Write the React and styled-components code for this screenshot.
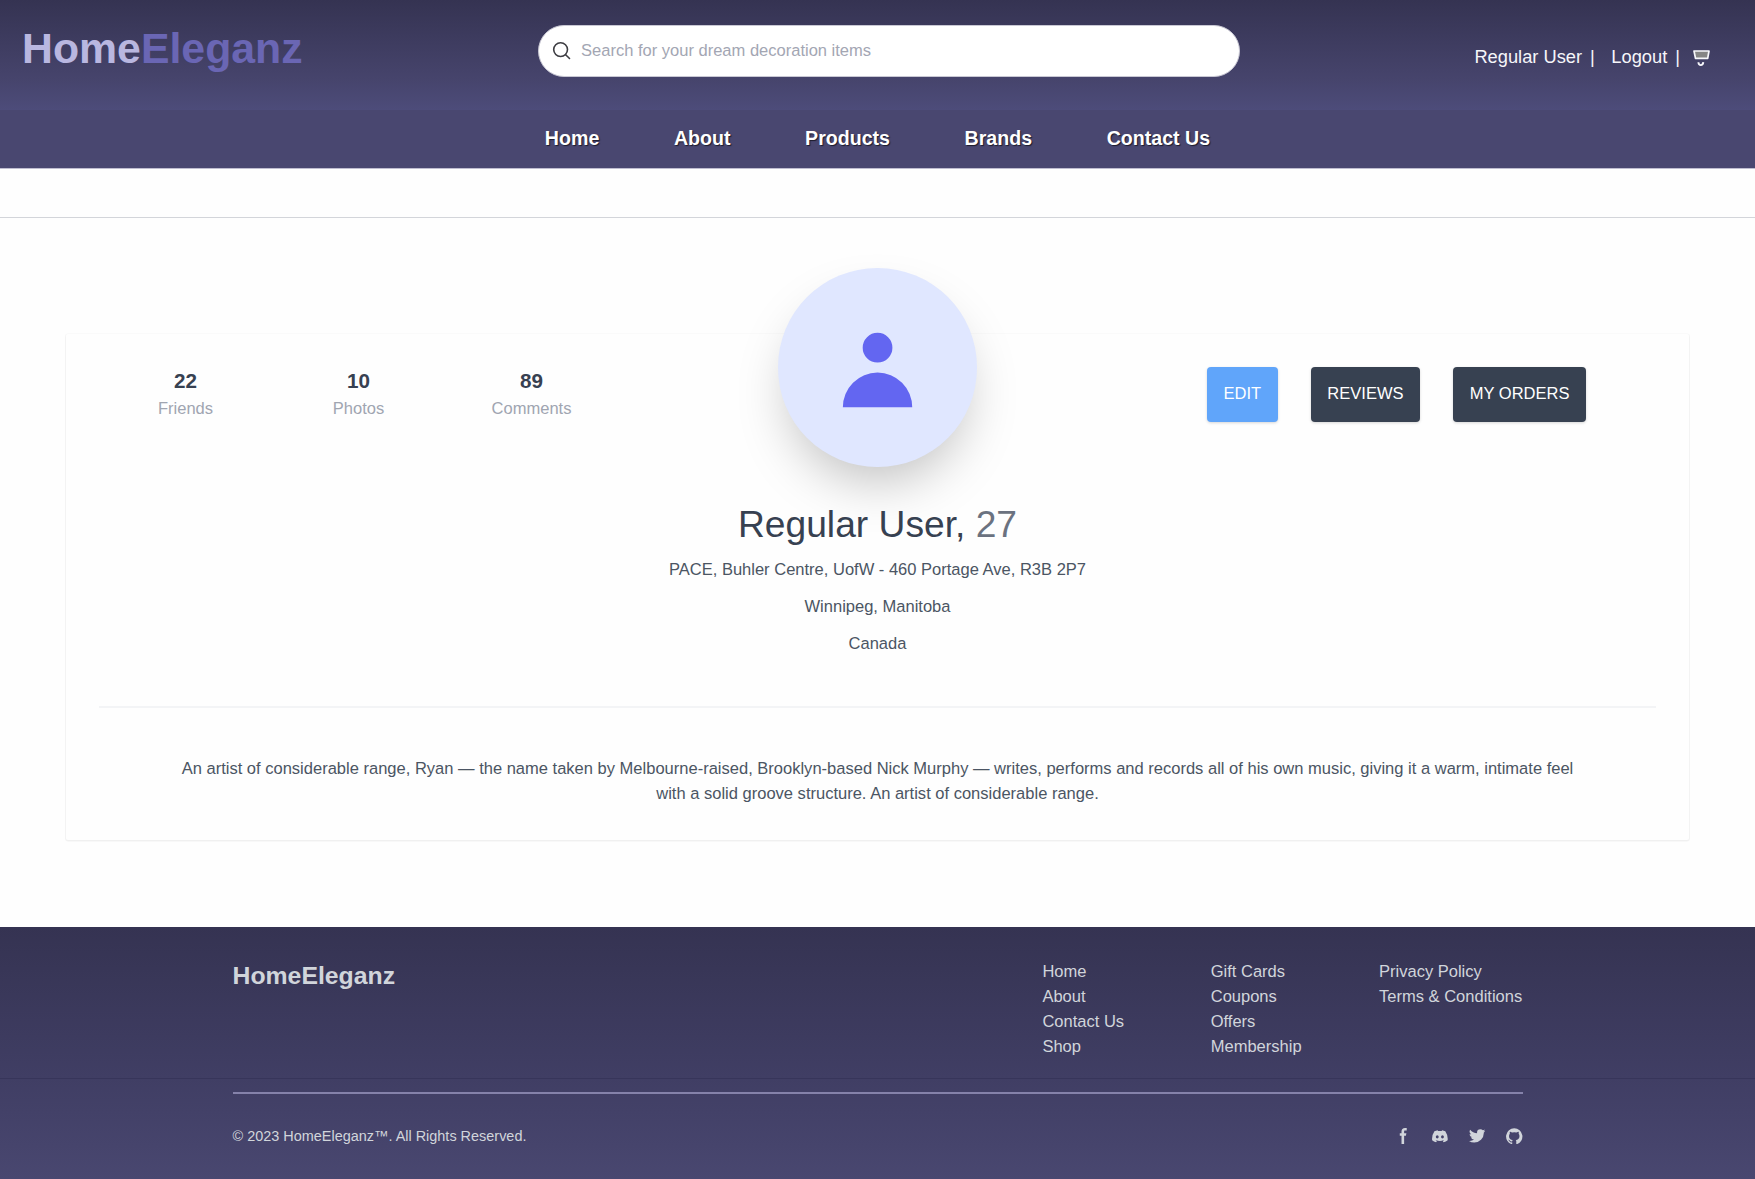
import React from "react";
import styled, { createGlobalStyle } from "styled-components";

const GlobalStyle = createGlobalStyle`
  *, *::before, *::after { box-sizing: border-box; }
  body {
    margin: 0;
    background: #fefefe;
    font-family: "Liberation Sans", Arial, Helvetica, sans-serif;
    font-size: 16.53px;
    line-height: 24.8px;
    color: #374151;
  }
  h1, h2, p, ul { margin: 0; padding: 0; }
  ul { list-style: none; }
  a { color: inherit; text-decoration: none; }
  svg { display: block; flex: none; }
`;

const TopBar = styled.header`
  display: grid;
  grid-template-columns: 1fr 702px 1fr;
  height: 110px;
  padding: 0 44px 0 22px;
  background: linear-gradient(#353352 0%, #46446c 72%, #4d4c7a 100%);
`;

const Logo = styled.a`
  padding-top: 23px;
  font-size: 42.8px;
  line-height: 50px;
  font-weight: 700;
  color: #b9b7e0;
`;

const LogoAccent = styled.span`
  color: #6a66b4;
`;

const SearchBox = styled.label`
  display: flex;
  align-items: center;
  gap: 10.5px;
  height: 52px;
  margin: 25px -22px 0 22px;
  padding: 0 13px;
  border: 1px solid #c9c8d4;
  border-radius: 26px;
  background: #fff;
  svg { margin-top: -2px; }
`;

const SearchInput = styled.input`
  flex: 1;
  padding: 0;
  border: 0;
  outline: 0;
  background: transparent;
  font: inherit;
  color: #374151;
  &::placeholder { color: #a3a6b3; opacity: 1; }
`;

const Account = styled.div`
  display: flex;
  justify-content: flex-end;
  align-items: center;
  height: 28px;
  margin-top: 43px;
  font-size: 18.3px;
  color: #f6f6fa;
  white-space: pre;
  svg { margin-top: 2px; }
`;

const Divider = styled.span`
  margin: 0 ${(p) => p.$after}px 0 8px;
`;

const Nav = styled.nav`
  display: flex;
  justify-content: center;
  align-items: center;
  gap: 74.6px;
  height: 59px;
  padding-bottom: 1px;
  border-bottom: 1px solid #bfbdd0;
  background: #494770;
`;

const NavLink = styled.a`
  font-size: 19.6px;
  font-weight: 700;
  color: #fff;
  text-shadow: 1px 1px 1px #1c1b2c;
`;

const Strip = styled.div`
  height: 49px;
  border-bottom: 1px solid #d3d5da;
`;

const Card = styled.main`
  margin: 116px 66px 87px;
  padding: 33px;
  border-radius: 2px;
  box-shadow: 0 1px 2px rgba(0, 0, 0, 0.03), 0 0.5px 0 1px rgba(0, 0, 0, 0.035);
`;

const Summary = styled.div`
  display: grid;
  grid-template-columns: repeat(3, 1fr);
  align-items: start;
`;

const Stats = styled.div`
  display: grid;
  grid-template-columns: repeat(3, 1fr);
  text-align: center;
`;

const StatValue = styled.p`
  margin-top: -1px;
  font-size: 20.65px;
  line-height: 29px;
  font-weight: 700;
  color: #374151;
`;

const StatLabel = styled.p`
  margin-top: 2px;
  color: #a0a5b1;
`;

const Avatar = styled.div`
  display: flex;
  align-items: center;
  justify-content: center;
  width: 198.3px;
  height: 198.3px;
  margin: -98.7px auto 0;
  border-radius: 50%;
  background: #e0e7ff;
  color: #6366f1;
  box-shadow: 0 25.8px 51.6px -12.4px rgba(0, 0, 0, 0.25);
`;

const Actions = styled.div`
  display: flex;
  justify-content: center;
  gap: 33px;
`;

const ActionButton = styled.button`
  height: 54.6px;
  padding: 0 16.6px;
  border: 0;
  border-radius: 4px;
  background: ${(p) => (p.$primary ? "#60a5fa" : "#374151")};
  color: #fff;
  font: inherit;
  text-transform: uppercase;
  box-shadow: 0 1px 3px rgba(0, 0, 0, 0.16);
`;

const Identity = styled.section`
  padding: 37.2px 0 48.6px;
  border-bottom: 2px solid #f3f4f6;
  text-align: center;
  color: #4b5563;
`;

const Name = styled.h1`
  margin-bottom: 13.4px;
  font-size: 37.2px;
  line-height: 41.3px;
  font-weight: 400;
  color: #374151;
`;

const Age = styled.span`
  color: #6b7280;
`;

const AddressLine = styled.p`
  & + & { margin-top: 12.2px; }
`;

const Bio = styled.p`
  margin-top: 49.2px;
  padding: 0 66px 0.6px;
  text-align: center;
  color: #4b5563;
`;

const Footer = styled.footer`
  height: 251.4px;
  color: #d1d5db;
  background: linear-gradient(#353352 0%, #403e64 60%, #494770 100%);
`;

const FooterTop = styled.div`
  display: flex;
  justify-content: space-between;
  height: 152px;
  padding: 33.2px 232.5px 0;
  border-bottom: 1px solid #37355a;
`;

const FooterBrand = styled.h2`
  margin-top: -1px;
  font-size: 24.8px;
  line-height: 33px;
  font-weight: 700;
`;

const LinkColumns = styled.div`
  display: grid;
  grid-template-columns: repeat(3, 143.5px);
  gap: 24.8px;
  white-space: nowrap;
`;

const FooterBottom = styled.div`
  display: flex;
  justify-content: space-between;
  align-items: center;
  height: 87px;
  margin: 12.5px 232.5px 0;
  border-top: 2px solid #8582aa;
`;

const Copyright = styled.span`
  font-size: 14.45px;
`;

const Socials = styled.div`
  display: flex;
  gap: 20.65px;
`;

const SearchIcon = () => (
  <svg width="19" height="19" viewBox="0 0 19 19" fill="none" stroke="#3d3d42" strokeWidth="1.6" strokeLinecap="round">
    <circle cx="8.6" cy="8.6" r="6.9" />
    <path d="m13.7 13.7 3.8 3.8" />
  </svg>
);

const CartIcon = () => (
  <svg width="18" height="18" viewBox="0 0 18 18" fill="none" stroke="#f6f6fa">
    <path d="M1 2h15l-1.3 7.4H2.5z" fill="#858585" strokeWidth="1.7" strokeLinejoin="round" />
    <path d="M5.4 13.2c.3 3.9 4.5 3.9 4.9 0" strokeWidth="1.9" />
  </svg>
);

const UserIcon = () => (
  <svg width="99.1" height="99.1" viewBox="0 0 20 20" fill="currentColor">
    <path fillRule="evenodd" clipRule="evenodd" d="M10 9a3 3 0 100-6 3 3 0 000 6zm-7 9a7 7 0 1114 0H3z" />
  </svg>
);

const SocialIcon = ({ viewBox, d }) => (
  <svg width="16.5" height="16.5" viewBox={viewBox} fill="currentColor">
    <path fillRule="evenodd" clipRule="evenodd" d={d} />
  </svg>
);

const socials = [
  {
    name: "facebook",
    viewBox: "0 0 8 19",
    d: "M6.135 3H8V0H6.135a4.147 4.147 0 0 0-4.142 4.142V6H0v3h2v9.938h3V9h2.021l.592-3H5V3.591A.6.6 0 0 1 5.592 3h.543Z",
  },
  {
    name: "discord",
    viewBox: "0 0 21 16",
    d: "M16.942 1.556a16.3 16.3 0 0 0-4.126-1.3 12.04 12.04 0 0 0-.529 1.1 15.175 15.175 0 0 0-4.573 0 11.585 11.585 0 0 0-.535-1.1 16.274 16.274 0 0 0-4.129 1.3A17.392 17.392 0 0 0 .182 13.218a15.785 15.785 0 0 0 4.963 2.521c.41-.564.773-1.16 1.084-1.785a10.63 10.63 0 0 1-1.706-.83c.143-.106.283-.217.418-.33a11.664 11.664 0 0 0 10.118 0c.137.113.277.224.418.33-.544.328-1.116.606-1.71.832a12.52 12.52 0 0 0 1.084 1.785 16.46 16.46 0 0 0 5.064-2.595 17.286 17.286 0 0 0-2.973-11.59ZM6.678 10.813a1.941 1.941 0 0 1-1.8-2.045 1.93 1.93 0 0 1 1.8-2.047 1.919 1.919 0 0 1 1.8 2.047 1.93 1.93 0 0 1-1.8 2.045Zm6.644 0a1.94 1.94 0 0 1-1.8-2.045 1.93 1.93 0 0 1 1.8-2.047 1.918 1.918 0 0 1 1.8 2.047 1.93 1.93 0 0 1-1.8 2.045Z",
  },
  {
    name: "twitter",
    viewBox: "0 0 20 17",
    d: "M20 1.892a8.178 8.178 0 0 1-2.355.635 4.074 4.074 0 0 0 1.8-2.235 8.344 8.344 0 0 1-2.605.98A4.13 4.13 0 0 0 13.85 0a4.068 4.068 0 0 0-4.1 4.038 4 4 0 0 0 .105.919A11.705 11.705 0 0 1 1.4.734a4.006 4.006 0 0 0 1.268 5.392 4.165 4.165 0 0 1-1.859-.5v.05A4.057 4.057 0 0 0 4.1 9.635a4.19 4.19 0 0 1-1.856.07 4.108 4.108 0 0 0 3.831 2.807A8.36 8.36 0 0 1 0 14.184 11.732 11.732 0 0 0 6.291 16 11.502 11.502 0 0 0 17.964 4.5c0-.177 0-.35-.012-.523A8.143 8.143 0 0 0 20 1.892Z",
  },
  {
    name: "github",
    viewBox: "0 0 20 20",
    d: "M10 .333A9.911 9.911 0 0 0 6.866 19.65c.5.092.678-.215.678-.477 0-.237-.01-1.017-.014-1.845-2.757.6-3.338-1.169-3.338-1.169a2.627 2.627 0 0 0-1.1-1.451c-.9-.615.07-.6.07-.6a2.084 2.084 0 0 1 1.518 1.021 2.11 2.11 0 0 0 2.884.823c.044-.503.268-.973.63-1.325-2.2-.25-4.516-1.1-4.516-4.9A3.832 3.832 0 0 1 4.7 7.068a3.56 3.56 0 0 1 .095-2.623s.832-.266 2.726 1.016a9.409 9.409 0 0 1 4.962 0c1.89-1.282 2.717-1.016 2.717-1.016.366.83.402 1.768.1 2.623a3.827 3.827 0 0 1 1.02 2.659c0 3.807-2.319 4.644-4.525 4.889a2.366 2.366 0 0 1 .673 1.834c0 1.326-.012 2.394-.012 2.72 0 .263.18.572.681.475A9.911 9.911 0 0 0 10 .333Z",
  },
];

const navItems = ["Home", "About", "Products", "Brands", "Contact Us"];

const stats = [
  { value: 22, label: "Friends" },
  { value: 10, label: "Photos" },
  { value: 89, label: "Comments" },
];

const address = [
  "PACE, Buhler Centre, UofW - 460 Portage Ave, R3B 2P7",
  "Winnipeg, Manitoba",
  "Canada",
];

const footerLinks = [
  ["Home", "About", "Contact Us", "Shop"],
  ["Gift Cards", "Coupons", "Offers", "Membership"],
  ["Privacy Policy", "Terms & Conditions"],
];

export default function App() {
  return (
    <>
      <GlobalStyle />
      <TopBar>
        <Logo>
          Home<LogoAccent>Eleganz</LogoAccent>
        </Logo>
        <SearchBox>
          <SearchIcon />
          <SearchInput placeholder="Search for your dream decoration items" />
        </SearchBox>
        <Account>
          <a>Regular User</a>
          <Divider $after={16.5}>|</Divider>
          <a>Logout</a>
          <Divider $after={13}>|</Divider>
          <CartIcon />
        </Account>
      </TopBar>
      <Nav>
        {navItems.map((item) => (
          <NavLink key={item}>{item}</NavLink>
        ))}
      </Nav>
      <Strip />
      <Card>
        <Summary>
          <Stats>
            {stats.map((s) => (
              <div key={s.label}>
                <StatValue>{s.value}</StatValue>
                <StatLabel>{s.label}</StatLabel>
              </div>
            ))}
          </Stats>
          <Avatar>
            <UserIcon />
          </Avatar>
          <Actions>
            <ActionButton $primary>Edit</ActionButton>
            <ActionButton>Reviews</ActionButton>
            <ActionButton>My Orders</ActionButton>
          </Actions>
        </Summary>
        <Identity>
          <Name>
            Regular User, <Age>27</Age>
          </Name>
          {address.map((line) => (
            <AddressLine key={line}>{line}</AddressLine>
          ))}
        </Identity>
        <Bio>
          An artist of considerable range, Ryan — the name taken by Melbourne-raised, Brooklyn-based Nick Murphy — writes,
          performs and records all of his own music, giving it a warm, intimate feel with a solid groove structure. An
          artist of considerable range.
        </Bio>
      </Card>
      <Footer>
        <FooterTop>
          <FooterBrand>HomeEleganz</FooterBrand>
          <LinkColumns>
            {footerLinks.map((column) => (
              <ul key={column[0]}>
                {column.map((link) => (
                  <li key={link}>
                    <a>{link}</a>
                  </li>
                ))}
              </ul>
            ))}
          </LinkColumns>
        </FooterTop>
        <FooterBottom>
          <Copyright>© 2023 HomeEleganz™. All Rights Reserved.</Copyright>
          <Socials>
            {socials.map((s) => (
              <SocialIcon key={s.name} viewBox={s.viewBox} d={s.d} />
            ))}
          </Socials>
        </FooterBottom>
      </Footer>
    </>
  );
}
